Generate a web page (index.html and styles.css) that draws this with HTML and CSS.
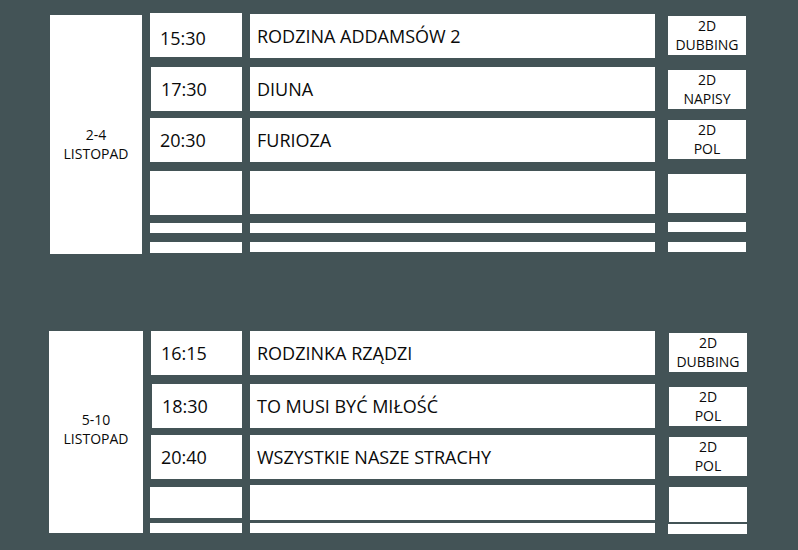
FILE: index.html
```html
<!DOCTYPE html>
<html lang="pl">
<head>
<meta charset="utf-8">
<title>Repertuar</title>
<link rel="stylesheet" href="styles.css">
</head>
<body>
<main class="page">
  <section class="week week-1">
    <div class="date"><span>2-4</span><span>LISTOPAD</span></div>
    <div class="col times">
      <div class="cell h44 time late">15:30</div>
      <div class="cell h44 time mt10 in1">17:30</div>
      <div class="cell h44 time mt7">20:30</div>
      <div class="cell h44 mt9"></div>
      <div class="cell h10 mt8"></div>
      <div class="cell h11 mt9"></div>
    </div>
    <div class="col titles">
      <div class="cell h44 title">RODZINA ADDAMSÓW 2</div>
      <div class="cell h44 title mt9">DIUNA</div>
      <div class="cell h44 title mt7">FURIOZA</div>
      <div class="cell h43 mt9"></div>
      <div class="cell h10 mt9"></div>
      <div class="cell h10 mt9"></div>
    </div>
    <div class="col formats">
      <div class="cell h39 format"><span>2D</span><span>DUBBING</span></div>
      <div class="cell h39 format mt15"><span>2D</span><span>NAPISY</span></div>
      <div class="cell h39 format mt11"><span>2D</span><span>POL</span></div>
      <div class="cell h39 mt15"></div>
      <div class="cell h10 mt9"></div>
      <div class="cell h10 mt10"></div>
    </div>
  </section>

  <section class="week week-2">
    <div class="date"><span>5-10</span><span>LISTOPAD</span></div>
    <div class="col times">
      <div class="cell h44 time in1">16:15</div>
      <div class="cell h44 time mt9 in2">18:30</div>
      <div class="cell h44 time mt7 in1">20:40</div>
      <div class="cell h31 mt8"></div>
      <div class="cell h10 mt5"></div>
    </div>
    <div class="col titles">
      <div class="cell h44 title">RODZINKA RZĄDZI</div>
      <div class="cell h44 title mt9">TO MUSI BYĆ MIŁOŚĆ</div>
      <div class="cell h44 title mt7">WSZYSTKIE NASZE STRACHY</div>
      <div class="cell h35 mt6"></div>
      <div class="cell h10 mt3"></div>
    </div>
    <div class="col formats">
      <div class="cell h39 format"><span>2D</span><span>DUBBING</span></div>
      <div class="cell h39 format mt15"><span>2D</span><span>POL</span></div>
      <div class="cell h39 format mt11"><span>2D</span><span>POL</span></div>
      <div class="cell h35 mt11"></div>
      <div class="cell h10 mt2 out1"></div>
    </div>
  </section>
</main>
</body>
</html>
```

FILE: styles.css
```css
html, body {
  margin: 0;
  padding: 0;
}

body {
  background: #435356;
  color: #0a0a0a;
  font-family: "Open Sans", "Noto Sans", sans-serif;
  width: 798px;
  height: 550px;
  overflow: hidden;
}

.page {
  padding-top: 13px;
}

.week {
  display: flex;
  align-items: flex-start;
  padding-left: 50px;
}

.week-2 {
  margin-top: 77px;
}

.date {
  width: 92px;
  background: #fff;
  display: flex;
  flex-direction: column;
  align-items: center;
  justify-content: center;
  font-size: 14px;
  line-height: 19px;
  box-sizing: border-box;
}

.week-1 .date {
  margin-top: 2px;
  height: 239px;
  padding-top: 19px;
}

.week-2 .date {
  margin-left: -1px;
  width: 94px;
  height: 202px;
  padding-bottom: 6px;
}

.col {
  display: flex;
  flex-direction: column;
}

.times {
  width: 92px;
  margin-left: 8px;
}

.week-2 .times {
  margin-left: 7px;
}

.titles {
  width: 405px;
  margin-left: 8px;
}

.week-1 .titles {
  margin-top: 1px;
}

.formats {
  width: 78px;
  margin-left: 13px;
  margin-top: 3px;
}

.week-2 .formats {
  margin-top: 2px;
  margin-left: 14px;
}

.cell {
  background: #fff;
  box-sizing: border-box;
}

.h44 { height: 44px; }
.h43 { height: 43px; }
.h39 { height: 39px; }
.h35 { height: 35px; }
.h31 { height: 31px; }
.h11 { height: 11px; }
.h10 { height: 10px; }

.mt2 { margin-top: 2px; }
.mt3 { margin-top: 3px; }
.mt5 { margin-top: 5px; }
.mt6 { margin-top: 6px; }
.mt7 { margin-top: 7px; }
.mt8 { margin-top: 8px; }
.mt9 { margin-top: 9px; }
.mt10 { margin-top: 10px; }
.mt11 { margin-top: 11px; }
.mt15 { margin-top: 15px; }

.in1 { margin-left: 1px; }
.in2 { margin-left: 2px; }
.out1 { margin-left: -1px; }

.time {
  display: flex;
  align-items: center;
  padding-left: 10px;
  font-size: 18px;
}

.time.late {
  padding-top: 5px;
}

.title {
  display: flex;
  align-items: center;
  padding-left: 7px;
  font-size: 18px;
}

.format {
  display: flex;
  flex-direction: column;
  align-items: center;
  font-size: 14px;
  line-height: 19px;
}
```
